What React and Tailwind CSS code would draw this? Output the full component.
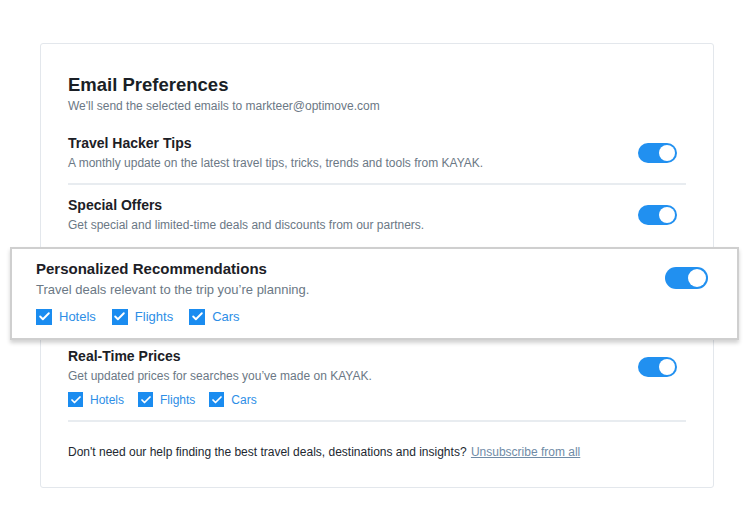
import { Check } from "lucide-react";

const font = { fontFamily: '"Liberation Sans", Arial, sans-serif' };

const Toggle = ({ big }) => (
  <div
    className={
      "flex items-center justify-end rounded-full bg-[#2190f0] px-[2px] " +
      (big ? "h-[22px] w-[43px]" : "h-[20px] w-[39px]")
    }
  >
    <div
      className={
        "rounded-full bg-white " + (big ? "h-[18px] w-[18px]" : "h-[16px] w-[16px]")
      }
    ></div>
  </div>
);

const CheckItem = ({ label, big }) => (
  <div className="flex items-center gap-[7px]">
    <div
      className={
        "flex items-center justify-center bg-[#1a8cf0] " +
        (big ? "h-[16px] w-[16px]" : "h-[15px] w-[15px]")
      }
    >
      <Check size={big ? 13 : 12} strokeWidth={3.5} color="white" />
    </div>
    <span className={"text-[#2d8ee6] " + (big ? "text-[13px]" : "text-[12px]")}>
      {label}
    </span>
  </div>
);

const Row = ({ title, desc, checks }) => (
  <div className="flex items-center justify-between">
    <div>
      <h2 className="text-[14px] font-bold leading-[18px] text-[#1c2026]">{title}</h2>
      <p className="mt-[3px] text-[12px] leading-[16px] text-[#6b7885]">{desc}</p>
      {checks && (
        <div className="mt-[7px] flex gap-[14px]">
          {["Hotels", "Flights", "Cars"].map((c) => (
            <CheckItem key={c} label={c} />
          ))}
        </div>
      )}
    </div>
    <div className={checks ? "mr-[9px] -mt-[22px]" : "mr-[9px]"}>
      <Toggle />
    </div>
  </div>
);

export default function App() {
  return (
    <div className="min-h-[527px] w-[750px] bg-white pt-[43px]" style={font}>
      <div className="ml-[40px] w-[674px] rounded-[3px] border border-[#e3e7ec] bg-white px-[27px] pt-[30px] pb-[27px]">
        <h1 className="text-[18.5px] font-bold leading-[22px] text-[#1a1f26]">
          Email Preferences
        </h1>
        <p className="mt-[2px] text-[12px] leading-[16px] text-[#6b7885]">
          We'll send the selected emails to markteer@optimove.com
        </p>

        <div className="mt-[20px] pb-[12px] border-b-2 border-[#e8ecf0]">
          <Row
            title="Travel Hacker Tips"
            desc="A monthly update on the latest travel tips, tricks, trends and tools from KAYAK."
          />
        </div>
        <div className="pt-[11px] pb-[14px]">
          <Row
            title="Special Offers"
            desc="Get special and limited-time deals and discounts from our partners."
          />
        </div>

        <div className="relative -ml-[58px] -mr-[53px] flex items-start justify-between border-2 border-[#cfcfcf] bg-white pl-[24px] pr-[29px] pt-[10px] pb-[11px] shadow-[0_3px_4px_rgba(0,0,0,0.18)]">
          <div>
            <h2 className="text-[15px] font-bold leading-[19px] text-[#1c2026]">
              Personalized Recommendations
            </h2>
            <p className="mt-[3px] text-[13px] leading-[17px] text-[#6b7885]">
              Travel deals relevant to the trip you’re planning.
            </p>
            <div className="mt-[9px] flex gap-[16px]">
              {["Hotels", "Flights", "Cars"].map((c) => (
                <CheckItem key={c} label={c} big />
              ))}
            </div>
          </div>
          <div className="mt-[8px]">
            <Toggle big />
          </div>
        </div>

        <div className="pt-[7px] pb-[11px] border-b-2 border-[#e8ecf0]">
          <Row
            title="Real-Time Prices"
            desc="Get updated prices for searches you’ve made on KAYAK."
            checks
          />
        </div>

        <p className="mt-[22px] text-[12px] leading-[16px] text-[#222831]">
          Don't need our help finding the best travel deals, destinations and insights?{" "}
          <a href="#" className="ml-[1px] text-[#6f8ba6] underline">
            Unsubscribe from all
          </a>
        </p>
      </div>
    </div>
  );
}
